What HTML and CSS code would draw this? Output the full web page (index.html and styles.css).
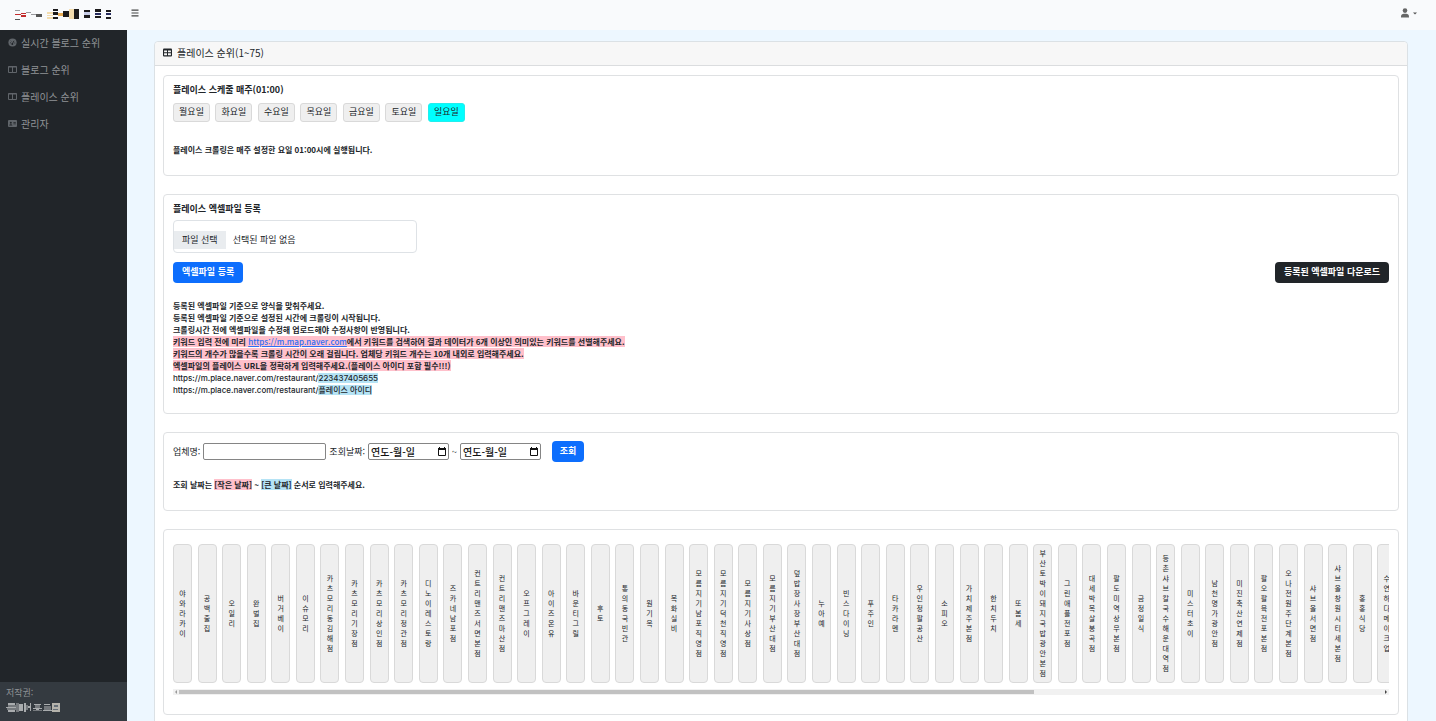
FILE: index.html
```html
<!DOCTYPE html>
<html lang="ko">
<head>
<meta charset="utf-8">
<meta name="viewport" content="width=device-width, initial-scale=1">
<title>플레이스 순위</title>
<link rel="stylesheet" href="styles.css">
</head>
<body>
<header class="topbar">
  <a class="brand" href="#" aria-label="홈">
    <svg width="98" height="12" viewBox="0 0 294 36" shape-rendering="crispEdges">
      <g fill="#9b9b9f"><path d="M1 3h15v3H1zM32 10h17v3H32zM49 15h15v4H49z"/></g>
      <g fill="#c22a2c"><path d="M1 15h18v3H1zM19 11h14v4H19zM17 18h15v6H17z"/></g>
      <path fill="#555" d="M1 30h15v3H1zM64 15h18v9H64z"/>
      <path fill="#f3dcae" d="M97 10h17v5H97zM97 18h17v3H97zM97 25h17v5H97zM161 1h15v28h-15z"/>
      <path fill="#e9ad55" d="M129 11h15v9h-15z"/>
      <path fill="#1c1a1b" d="M114 0h15v6h-15zM114 10h15v7h-15zM114 23h15v6h-15zM144 5h17v19h-17zM176 1h17v28h-17zM208 3h17v5h-17zM208 18h17v8h-17zM241 1h16v7h-16zM241 20h16v8h-16zM273 2h16v7h-16zM273 23h16v6h-16z"/>
      <path fill="#c7cce6" d="M208 9h17v8h-17z"/>
      <path fill="#252a5c" d="M241 11h16v6h-16zM273 13h16v6h-16z"/>
    </svg>
  </a>
  <button class="icon-button" type="button" aria-label="메뉴">
    <svg width="8" height="8" viewBox="0 0 8 8"><path fill="none" stroke="#444" stroke-width="1.2" d="M.5 1.2h7M.5 4h7M.5 6.8h7"/></svg>
  </button>
  <button class="icon-button user" type="button" aria-label="사용자">
    <svg width="8" height="10" viewBox="0 0 8 10"><circle cx="4" cy="2.6" r="2.3" fill="#666"/><path fill="#666" d="M0 9.6V8.5C0 6.7 1.3 5.7 2.8 5.7h2.4C6.7 5.7 8 6.7 8 8.5v1.1z"/></svg>
    <svg width="4" height="3" viewBox="0 0 4 3"><path fill="#555" d="M0 .4h4L2 2.6z"/></svg>
  </button>
</header>
<div class="shell">
  <aside class="sidebar">
    <nav class="menu">
      <a href="#"><svg width="9" height="9" viewBox="0 0 9 9"><circle cx="4.5" cy="4.5" r="4.1" fill="#60656a"/><path d="M4.2 6 6 2.8M2 4.8h.8M2.8 2.8l.5.5M6.4 5h.8" stroke="#212529" stroke-width=".9" fill="none"/><circle cx="4.3" cy="6.1" r="1" fill="#212529"/></svg>실시간 블로그 순위</a>
      <a href="#"><svg width="9" height="9" viewBox="0 0 9 9"><path d="M.5 1.5h8v6h-8zM.5 2h8M4.5 2v5.5" stroke="#60656a" fill="none"/></svg>블로그 순위</a>
      <a href="#"><svg width="9" height="9" viewBox="0 0 9 9"><path d="M.5 1.5h8v6h-8zM.5 2h8M4.5 2v5.5" stroke="#60656a" fill="none"/></svg>플레이스 순위</a>
      <a href="#"><svg width="9" height="9" viewBox="0 0 9 9"><path fill="#60656a" d="M1 1h7q1 0 1 1v5q0 1-1 1H1Q0 8 0 7V2q0-1 1-1z"/><circle cx="2.8" cy="3.8" r="1" fill="#212529"/><path d="M1.2 6.6q0-1.4 1.6-1.4t1.6 1.4zM5.4 3h2.4v.7H5.4zM5.4 4.6h2.4v.7H5.4z" fill="#212529"/></svg>관리자</a>
    </nav>
    <footer class="copyright">
      <span>저작권:</span>
      <svg width="54" height="11" viewBox="0 0 54 11" shape-rendering="crispEdges" role="img" aria-label="회사 로고">
        <path fill="#a9acae" d="M2 1h7v2H2zM0 5h12v1H0zM2 8h7v2H2zM13 2h4v7h-4zM18 1h2v9h-2zM24 1h1v8h-1zM22 4h2v2h-2zM28 2h7v1h-7zM27 6h9v1h-9zM30 7h3v2h-3zM38 2h6v1h-6zM37 8h9v1h-9z"/>
        <path fill="#75797d" d="M2 3h8v2H2zM1 6h9v2H1zM10 1h3v9h-3zM20 3h2v5h-2zM29 3h5v3h-5zM27 8h9v1h-9zM38 4h7v4h-7z"/>
        <path fill="#b5b3ac" d="M46 1h8v9h-8z"/><path fill="#656e77" d="M48 3h4v2h-4zM47 7h5v1h-5z"/>
      </svg>
    </footer>
  </aside>
  <main class="content">
    <section class="page-card">
      <h1 class="page-title"><svg width="9" height="9" viewBox="0 0 9 9"><path fill="#212529" d="M1 .5h7q1 0 1 1v6q0 1-1 1H1q-1 0-1-1v-6q0-1 1-1z"/><path fill="#f7f7f7" d="M1.1 2.4H4v1.8H1.1zM5 2.4h2.9v1.8H5zM1.1 5.3H4v2H1.1zM5 5.3h2.9v2H5z"/></svg>플레이스 순위(1~75)</h1>
      <div class="page-body">
        <section class="panel schedule">
          <h2>플레이스 스케줄 매주(01:00)</h2>
          <div class="days">
            <button type="button">월요일</button><button type="button">화요일</button><button type="button">수요일</button><button type="button">목요일</button><button type="button">금요일</button><button type="button">토요일</button><button type="button" class="active">일요일</button>
          </div>
          <p class="note">플레이스 크롤링은 매주 설정한 요일 01:00시에 실행됩니다.</p>
        </section>
        <section class="panel upload">
          <h2>플레이스 엑셀파일 등록</h2>
          <label class="file"><input type="file"><span class="file-button">파일 선택</span><span>선택된 파일 없음</span></label>
          <div class="actions">
            <button type="button" class="btn primary">엑셀파일 등록</button>
            <button type="button" class="btn dark">등록된 엑셀파일 다운로드</button>
          </div>
          <div class="note guide">
            <p>등록된 엑셀파일 기준으로 양식을 맞춰주세요.</p>
            <p>등록된 엑셀파일 기준으로 설정된 시간에 크롤링이 시작됩니다.</p>
            <p>크롤링시간 전에 엑셀파일을 수정해 업로드해야 수정사항이 반영됩니다.</p>
            <p><mark class="pink">키워드 입력 전에 미리 <a href="#">https://m.map.naver.com</a>에서 키워드를 검색하여 결과 데이터가 6개 이상인 의미있는 키워드를 선별해주세요.</mark></p>
            <p><mark class="pink">키워드의 개수가 많을수록 크롤링 시간이 오래 걸립니다. 업체당 키워드 개수는 10개 내외로 입력해주세요.</mark></p>
            <p><mark class="pink">엑셀파일의 플레이스 URL을 정확하게 입력해주세요.(플레이스 아이디 포함 필수!!!)</mark></p>
            <p class="url">https://m.place.naver.com/restaurant/<mark class="blue">223437405655</mark></p>
            <p class="url">https://m.place.naver.com/restaurant/<mark class="blue">플레이스 아이디</mark></p>
          </div>
        </section>
        <section class="panel search">
          <form class="filters">
            <label for="shop">업체명:</label>
            <input id="shop" class="shop" type="text">
            <label for="from">조회날짜:</label>
            <span class="date"><input id="from" type="text" placeholder="연도-월-일"><svg width="8" height="9" viewBox="0 0 8 9"><path d="M.5 1.5h7v7h-7z" fill="none" stroke="#111"/><path fill="#111" d="M0 1h8v2H0zM1 0h1v1H1zM6 0h1v1H6z"/></svg></span>
            <span>~</span>
            <span class="date"><input type="text" aria-label="종료 날짜" placeholder="연도-월-일"><svg width="8" height="9" viewBox="0 0 8 9"><path d="M.5 1.5h7v7h-7z" fill="none" stroke="#111"/><path fill="#111" d="M0 1h8v2H0zM1 0h1v1H1zM6 0h1v1H6z"/></svg></span>
            <button type="button" class="btn primary query">조회</button>
          </form>
          <p class="note">조회 날짜는 <mark class="pink">[작은 날짜]</mark> ~ <mark class="blue">[큰 날짜]</mark> 순서로 입력해주세요.</p>
        </section>
        <section class="panel shops">
          <div class="shop-scroll">
            <div class="shop-list">
              <button type="button">야와라카이</button><button type="button">공백출집</button><button type="button">오일리</button><button type="button">완벌집</button><button type="button">버거베이</button><button type="button">이슈모리</button><button type="button">카츠모리동김해점</button><button type="button">카츠모리기장점</button><button type="button">카츠모리상인점</button><button type="button">카츠모리정관점</button>
              <button type="button">디노이레스토랑</button><button type="button">즈카네남포점</button><button type="button">컨트리맨즈서면본점</button><button type="button">컨트리맨즈마산점</button><button type="button">오프그레이</button><button type="button">아이즈온유</button><button type="button">바운티그릴</button><button type="button">후토</button><button type="button">통의동국빈관</button><button type="button">원기옥</button>
              <button type="button">목화실비</button><button type="button">모름지기남포직영점</button><button type="button">모름지기덕천직영점</button><button type="button">모름지기사상점</button><button type="button">모름지기부산대점</button><button type="button">덮밥장사장부산대점</button><button type="button">누아예</button><button type="button">빈스다이닝</button><button type="button">푸주인</button><button type="button">타카라멘</button>
              <button type="button">우인정팔공산</button><button type="button">소피오</button><button type="button">가치제주본점</button><button type="button">한치두치</button><button type="button">또봄세</button><button type="button">부산토박이돼지국밥광안본점</button><button type="button">그린애플전포점</button><button type="button">대세박목살봉곡점</button><button type="button">팔도미역상무본점</button><button type="button">금정일식</button>
              <button type="button">등촌샤브칼국수해운대역점</button><button type="button">미스터초이</button><button type="button">남천명가광안점</button><button type="button">미진축산연제점</button><button type="button">팔오팔육전포본점</button><button type="button">오나전원주단계본점</button><button type="button">샤브올서면점</button><button type="button">샤브올창원시티세본점</button><button type="button">홍홍식당</button><button type="button">수연하다메이크업</button>
            </div>
          </div>
          <div class="scrollbar" aria-hidden="true"><span class="arrow left"></span><span class="track"><span class="thumb"></span></span><span class="arrow right"></span></div>
        </section>
      </div>
    </section>
  </main>
</div>
</body>
</html>
```
FILE: styles.css
```css
* { box-sizing: border-box; }
body {
  margin: 0;
  height: 100vh;
  display: flex;
  flex-direction: column;
  overflow: hidden;
  background: #edf7ff;
  color: #212529;
  font-family: "Noto Sans CJK KR", sans-serif;
  font-size: 10px;
  line-height: 14px;
}
button, input { font: inherit; color: inherit; margin: 0; }
h1, h2, p { margin: 0; }
svg { flex: none; }

.topbar {
  flex: none;
  display: flex;
  align-items: center;
  height: 30px;
  padding: 0 19px 4px 15px;
  background: #f9fafc;
}
.brand { display: flex; width: 116px; padding-top: 4px; }
.icon-button {
  display: flex;
  align-items: center;
  gap: 4px;
  padding: 0;
  border: 0;
  background: none;
}
.user { margin-left: auto; }

.shell { flex: 1; min-height: 0; display: flex; }
.sidebar {
  flex: none;
  width: 127px;
  display: flex;
  flex-direction: column;
  justify-content: space-between;
  background: #212529;
  color: #909396;
}
.menu a {
  display: flex;
  align-items: center;
  gap: 4px;
  height: 27px;
  padding: 0 8px 2px;
  color: inherit;
  text-decoration: none;
}
.copyright {
  display: flex;
  flex-direction: column;
  height: 39px;
  padding: 4px 6px;
  gap: 2px;
  background: #343a40;
  font-size: 9px;
}

.content {
  flex: 1;
  min-width: 0;
  overflow-y: auto;
  scrollbar-width: none;
  padding: 11px 28px 0 27px;
}
.page-card {
  border: 1px solid #dbe1e5;
  border-radius: 4px;
  background: #fff;
}
.page-title {
  display: flex;
  align-items: center;
  gap: 5px;
  height: 24px;
  padding: 0 8px 2px;
  border-bottom: 1px solid #dbdddf;
  background: #f7f7f7;
  border-radius: 4px 4px 0 0;
  font-size: 10px;
  font-weight: 400;
}
.page-body {
  display: flex;
  flex-direction: column;
  gap: 18px;
  padding: 9px 8px 18px;
}
.panel {
  padding: 8px 9px 18px;
  border: 1px solid #dfe1e3;
  border-radius: 4px;
}
.panel h2 { font-size: 9px; line-height: 12px; font-weight: 700; }
.note { font-size: 8px; line-height: 12px; font-weight: 700; }
mark { color: inherit; }
.pink { background: #ffc0cb; }
.blue { background: #b5e3f5; }

.days { display: flex; gap: 0.45%; margin-top: 7px; }
.days button {
  width: 37px;
  height: 19px;
  padding: 0 0 2px;
  border: 1px solid #d9d9d9;
  border-radius: 3px;
  background: #efefef;
  font-size: 9px;
  line-height: 14px;
}
.days .active { background: #0ff; border-color: #2ee; }
.schedule .note { padding: 22px 0 1px; }

.upload { padding-bottom: 17px; }
.file {
  position: relative;
  display: flex;
  align-items: center;
  gap: 7px;
  width: 244px;
  height: 33px;
  margin-top: 5px;
  padding: 10px 0 3px;
  border: 1px solid #dee2e6;
  border-radius: 4px;
  font-size: 9px;
}
.file input { position: absolute; inset: 0; opacity: 0; }
.file-button { padding: 2px 8px; background: #e9ecef; }
.actions { display: flex; justify-content: space-between; margin-top: 9px; }
.btn {
  height: 21px;
  padding: 0 9px 2px;
  border: 0;
  border-radius: 4px;
  color: #fff;
  font-size: 9px;
  font-weight: 700;
  line-height: 14px;
}
.primary { background: #0d6efd; }
.dark { background: #212529; }
.guide { margin-top: 17px; }
.guide a { color: #2f6df5; font-weight: 500; }
.url { font-family: Inter, "Noto Sans CJK KR", sans-serif; font-weight: 500; }

.filters { display: flex; align-items: center; gap: 3px; font-size: 9px; }
.filters input {
  height: 17px;
  padding: 0 2px;
  border: 1px solid #858585;
  border-radius: 2px;
  background: #fff;
}
.filters .shop { width: 123px; }
.date { position: relative; display: flex; }
.date input { width: 81px; font-size: 10px; font-weight: 500; }
.date input::placeholder { color: #111; opacity: 1; }
.date svg { position: absolute; right: 3px; top: 4px; }
.query { width: 32px; margin-left: 8px; padding: 0 0 2px; }
.search { padding-bottom: 19px; }
.search .note { margin-top: 17px; }

.shops { padding: 14px 9px 19px; }
.shop-scroll { overflow: hidden; }
.shop-list {
  display: grid;
  grid-auto-flow: column;
  grid-auto-columns: 19px;
  column-gap: 0.326%;
  width: 141%;
}
.shop-list button {
  height: 139px;
  padding: 0 5px 2px;
  border: 1px solid #d9d9d9;
  border-radius: 4px;
  background: #efefef;
  font-size: 7px;
  line-height: 10px;
  word-break: break-all;
}
.scrollbar {
  display: flex;
  align-items: center;
  height: 6px;
  margin-top: 6px;
  background: #f1f1f1;
}
.track { flex: 1; }
.thumb { display: block; width: 71%; height: 4px; background: #c1c1c1; }
.arrow { width: 6px; height: 4px; }
.arrow::before {
  content: "";
  display: block;
  width: 0;
  margin: 0 auto;
  border: 2px solid transparent;
}
.left::before { border-right-color: #999; border-left-width: 0; }
.right::before { border-left-color: #444; border-right-width: 0; }
```
